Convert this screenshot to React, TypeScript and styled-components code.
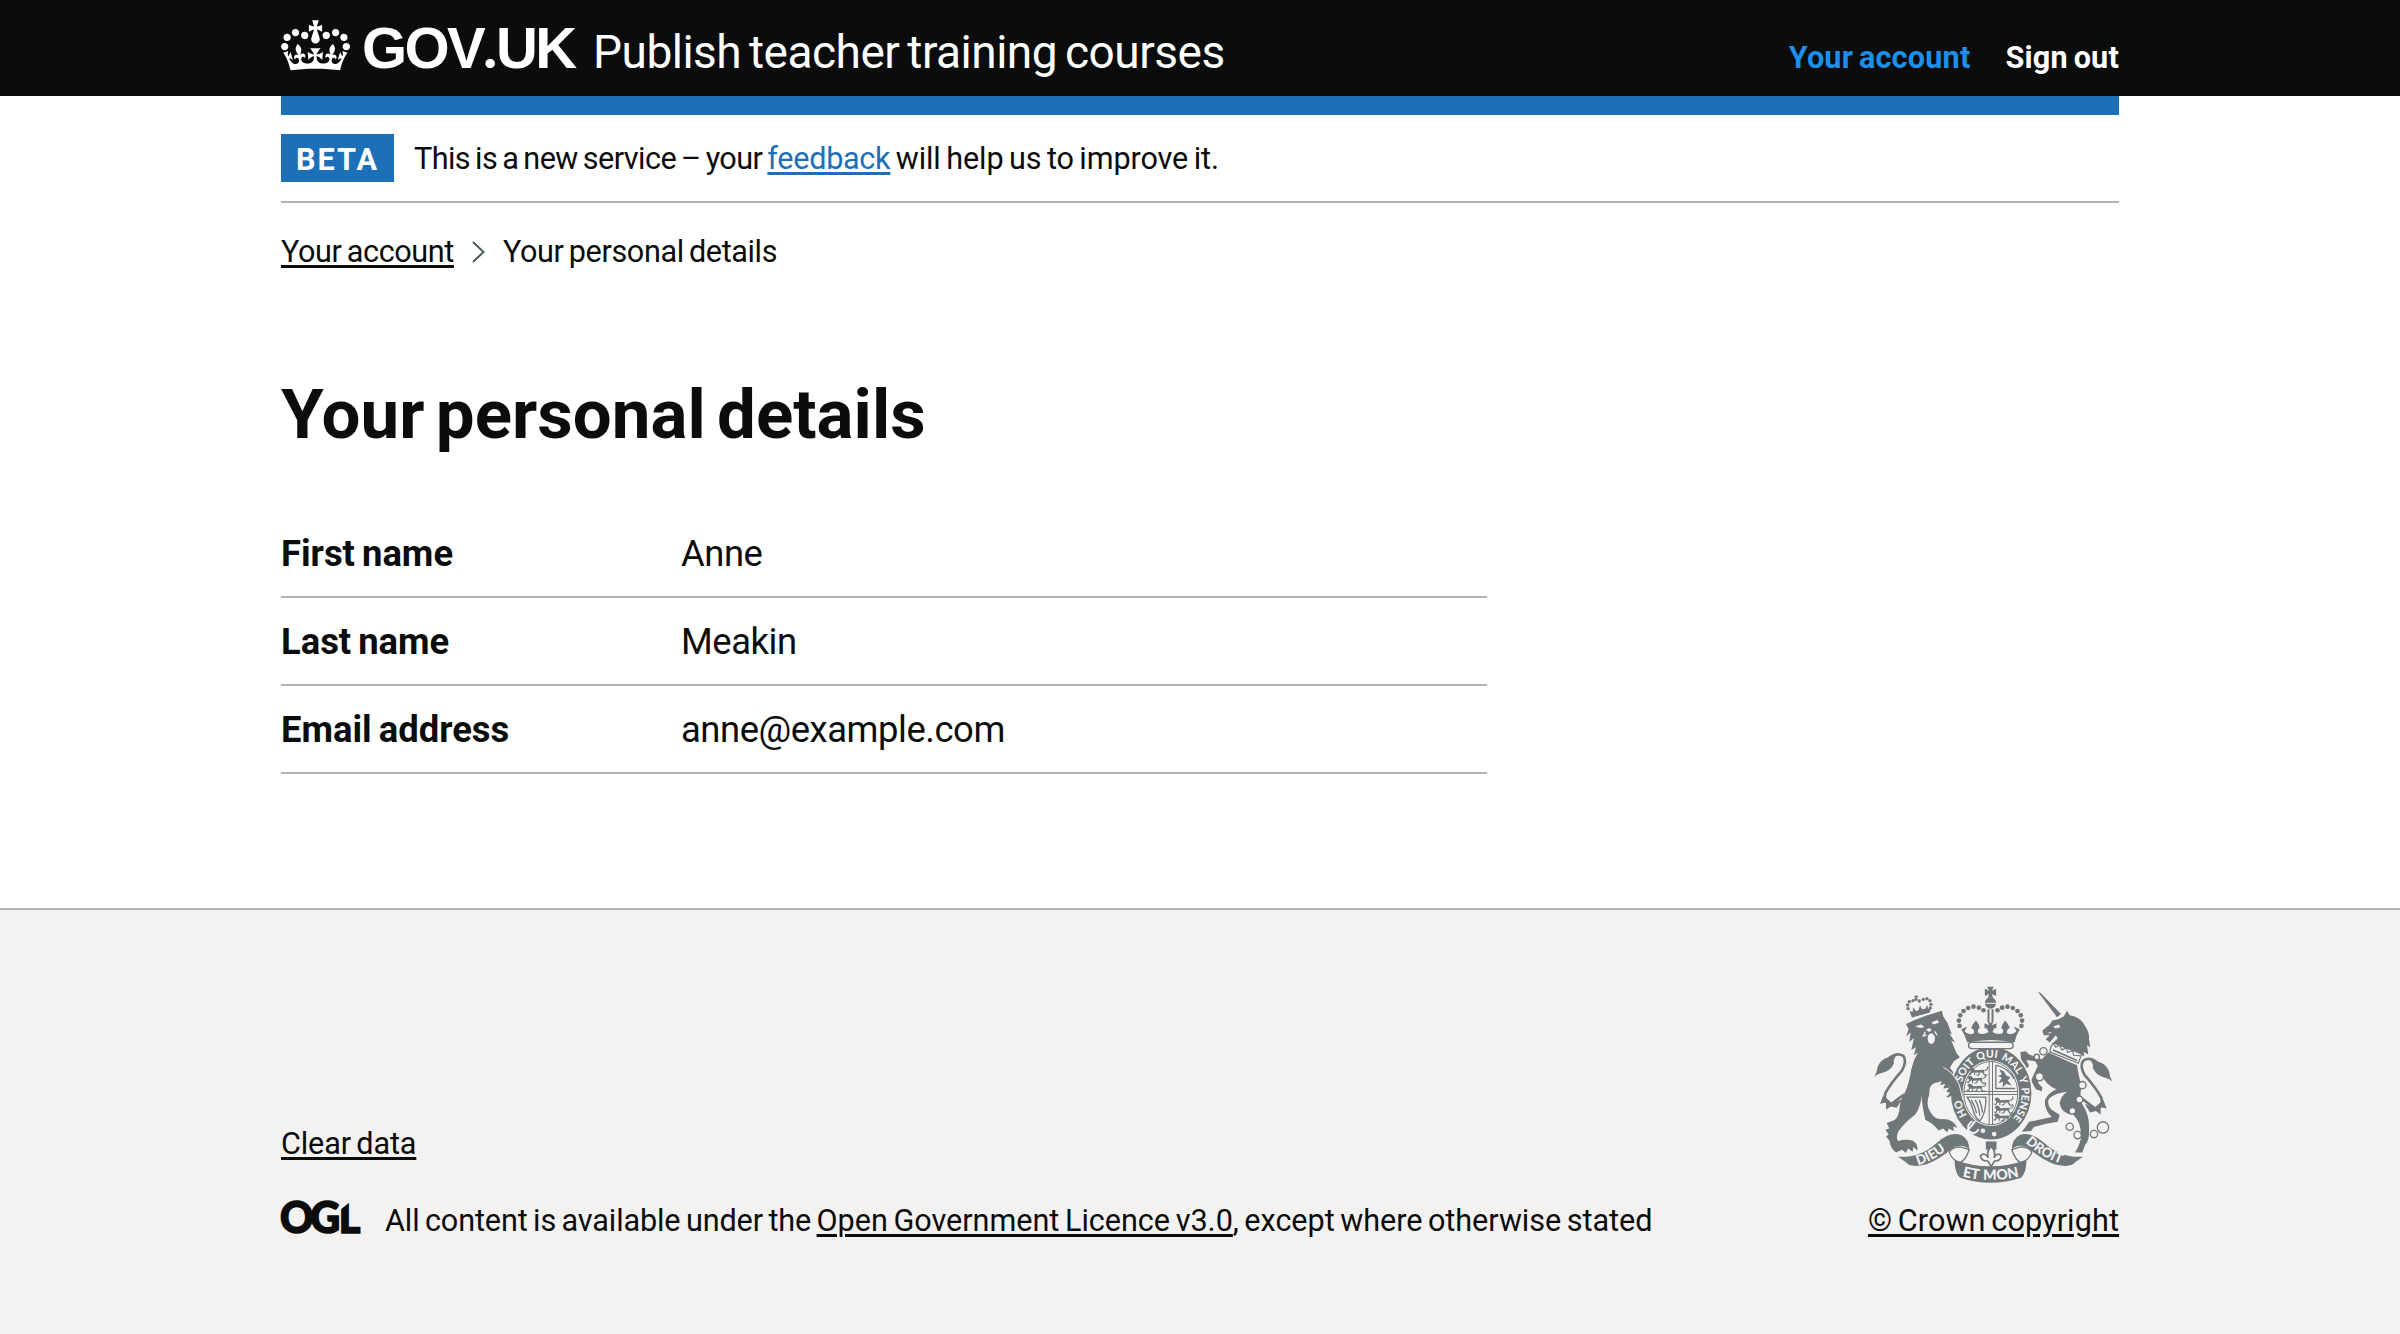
import React from 'react';
import styled, { createGlobalStyle } from 'styled-components';

const ink = '#0b0c0c';
const blue = '#1d70b8';
const rule = '#b1b4b6';
const canvas = '#f3f2f1';
const crest = '#6f777b';

const GlobalStyle = createGlobalStyle`
  body {
    margin: 0;
    background: ${canvas};
    color: ${ink};
    font-family: Roboto, "Liberation Sans", Arial, sans-serif;
    font-size: 30.6px;
    -webkit-font-smoothing: antialiased;
  }
`;

const Page = styled.div`
  display: flex;
  flex-direction: column;
  min-height: 1334px;
  background: #fff;
`;

const Container = styled.div`
  width: 1838px;
  margin: 0 auto;
`;

const Header = styled.header`
  background: ${ink};
  color: #fff;
`;

const HeaderBar = styled(Container)`
  display: flex;
  align-items: baseline;
  height: 96px;
`;

const Crown = styled.svg`
  align-self: flex-start;
  width: 69px;
  height: 51px;
  margin-top: 20px;
  fill: currentColor;
`;

const Wordmark = styled.span`
  margin-left: 12px;
  width: 231px;
  font: 700 58px/95px "Liberation Sans", Arial, sans-serif;
  letter-spacing: -2.6px;
  white-space: nowrap;
`;

const Dot = styled.span`
  font-family: Lato, sans-serif;
  font-weight: 900;
  line-height: 0;
  letter-spacing: -1px;
`;

const ServiceName = styled.span`
  font-size: 46px;
  line-height: 54px;
  letter-spacing: -0.5px;
  word-spacing: -3px;
  white-space: nowrap;
`;

const Nav = styled.nav`
  display: flex;
  gap: 35px;
  margin-left: auto;
`;

const NavLink = styled.a<{ $current?: boolean }>`
  color: ${p => (p.$current ? '#1d8feb' : '#fff')};
  font-weight: 700;
  letter-spacing: 0.2px;
  word-spacing: -2px;
  white-space: nowrap;
`;

const Accent = styled.div`
  height: 19px;
  background: ${blue};
`;

const PhaseBanner = styled.div`
  display: flex;
  align-items: center;
  gap: 20px;
  padding: 19px 0;
  border-bottom: 2px solid ${rule};
`;

const Tag = styled.strong`
  box-sizing: border-box;
  height: 48px;
  width: 113px;
  padding: 2px 0 0 15px;
  line-height: 47px;
  letter-spacing: 2px;
  color: #fff;
  background: ${blue};
`;

const Text = styled.span<{ $ls?: number }>`
  letter-spacing: ${p => p.$ls ?? -0.38}px;
  word-spacing: -2px;
  line-height: 38px;
  white-space: nowrap;
`;

const PhaseText = styled(Text)`
  padding-top: 2px;
`;

const Spaced = styled.span<{ $ls: number }>`
  letter-spacing: ${p => p.$ls}px;
`;

const Link = styled.a<{ $colour?: string; $ls?: number }>`
  color: ${p => p.$colour ?? ink};
  letter-spacing: ${p => (p.$ls === undefined ? 'inherit' : `${p.$ls}px`)};
  text-decoration: underline;
  text-decoration-thickness: 2.6px;
  text-underline-offset: 3px;
`;

const Breadcrumbs = styled.nav`
  display: flex;
  align-items: center;
  padding-top: 30px;
`;

const Chevron = styled.svg`
  width: 13px;
  height: 24px;
  margin: 0 18px 0 18px;
  fill: none;
  stroke: #505a5f;
  stroke-width: 2;
`;

const Title = styled.h1`
  margin: 107px 0 58px;
  font-size: 69px;
  line-height: 74px;
  letter-spacing: 0.05px;
  word-spacing: -6px;
`;

const SummaryList = styled.dl`
  width: 1206px;
  margin: 0;
`;

const SummaryRow = styled.div`
  display: grid;
  grid-template-columns: 400px 1fr;
  height: 86px;
  border-bottom: 2px solid ${rule};
  font-size: 36.4px;
  line-height: 87px;
`;

const Key = styled.dt`
  font-weight: 700;
  word-spacing: -2px;
`;

const Value = styled.dd`
  margin: 0;
  letter-spacing: -0.44px;
`;

const Footer = styled.footer`
  flex: 1;
  margin-top: 134px;
  padding-top: 76px;
  border-top: 2px solid ${rule};
  background: ${canvas};
`;

const FooterRow = styled(Container)`
  display: flex;
  justify-content: space-between;
  align-items: flex-end;
`;

const FooterMeta = styled.div`
  display: flex;
  flex-direction: column;
  gap: 39px;
`;

const Licence = styled.div`
  display: flex;
  align-items: center;
`;

const OglLogo = styled.svg`
  width: 80px;
  height: 38px;
  margin-right: 24px;
  overflow: visible;
  font-family: Lato, sans-serif;
  font-weight: 900;
  font-size: 43px;
  letter-spacing: -3.4px;
  fill: ${ink};
  stroke: ${ink};
  stroke-width: 1.6;
`;

const Copyright = styled.div`
  display: flex;
  flex-direction: column;
  align-items: center;
  gap: 19px;
`;

const ArmsSvg = styled.svg`
  width: 239px;
  height: 197px;
  fill: ${crest};
  overflow: visible;
`;

const Lettering = styled.text<{ $size: number }>`
  font-family: Lato, sans-serif;
  font-weight: 900;
  font-size: ${p => p.$size}px;
  word-spacing: 4px;
  fill: ${canvas};
`;

const details = [
  ['First name', 'Anne'],
  ['Last name', 'Meakin'],
  ['Email address', 'anne@example.com'],
];

const archBeads = [
  [299, 150], [297, 134], [301, 118], [311, 105], [325, 96], [341, 92], [357, 95], [371, 103],
];

const lionCrownBeads = [
  [144, 98], [143, 87], [148, 77], [159, 74], [168, 70], [178, 75], [190, 70], [201, 68], [210, 74], [213, 85], [211, 96],
];

const chainRings = [
  [551, 226, 11], [531, 243, 8], [539, 303, 12], [668, 328, 11], [659, 371, 10],
  [638, 405, 10], [630, 453, 11], [654, 478, 11], [703, 475, 11], [730, 455, 17],
];

const Tail = () => (
  <g>
    <path d="M42 304 Q52 290 52 276 Q62 242 108 241 Q98 254 102 262 Q92 284 70 290 Q52 293 42 304Z" />
    <path d="M88 246 Q112 228 130 240 Q142 256 126 284 Q92 322 76 352 Q70 378 90 388 L132 356" fill="none" stroke={crest} strokeWidth="8" />
    <path d="M70 358 L60 384 L78 380 L78 402 L92 392 L110 396 L126 370 L96 382Z" />
  </g>
);

const Passant = ({ x, y }: { x: number; y: number }) => (
  <g transform={`translate(${x} ${y})`}>
    <path d="M8 8 L4 16 L-1 15 M16 9 L16 18 M32 9 L28 17 L22 18 M40 9 L46 18 L54 18 M46 4 Q60 0 54 -8" fill="none" stroke={crest} strokeWidth="3.5" />
    <path d="M0 0 Q6 -8 14 -2 L18 3 L44 2 L46 10 L8 11Z" />
  </g>
);

const Arms = () => (
  <ArmsSvg viewBox="42 30 718 592" aria-hidden="true">
    {/* lion supporter */}
    <Tail />
    {lionCrownBeads.map(([x, y], i) => <circle key={i} cx={x} cy={y} r="5" />)}
    <path d="M163 62 H175 M169 58 V72" stroke={crest} strokeWidth="4" />
    <path d="M148 104 L158 108 L160 94 L168 106 L176 102 L180 88 L186 100 L196 98 L202 86 L204 98 L212 96 L210 110 L156 125Z" />
    <path d="M138 144 L164 132 L202 118 L246 104 L250 122 L262 140 L276 176 L268 172 L286 200 L274 194 L290 232 L300 244 L282 256 L270 276 L284 294 L300 330 L305 370 L296 374 L290 366 L282 376 L276 364 L258 364 L272 352 L260 348 L268 336 L250 338 L256 324 L240 328 L246 316 L222 322 Q206 330 208 356 Q196 388 212 410 Q224 432 250 430 Q280 430 292 456 L280 452 L282 466 L266 458 L262 470 L250 458 L236 464 Q216 440 196 432 Q188 400 184 360 Q184 390 166 416 Q134 440 116 466 Q106 484 114 496 Q136 490 158 494 Q176 506 172 524 L160 514 L158 528 L144 518 L138 532 L126 522 L108 530 Q92 520 88 494 L78 482 L86 476 L76 462 L88 458 L80 442 L96 436 Q112 434 118 404 Q118 374 136 348 Q148 320 154 280 Q160 252 174 230 L162 238 L168 214 L154 222 L162 186 L148 198 L152 170 L138 182 L146 160Z" />
    <path d="M166 150 L184 146 L194 154 L178 156Z M214 140 L232 132 L238 140 L222 146Z M198 162 L208 156 L216 162 L208 168Z" fill={canvas} />
    <ellipse cx="214" cy="188" rx="11" ry="16" fill={canvas} />
    <path d="M196 168 L190 180 L200 178 M224 166 L232 178" fill="none" stroke={canvas} strokeWidth="4" />

    {/* unicorn supporter */}
    <g transform="matrix(-1 0 0 1 801 14)"><Tail /></g>
    <path d="M535 48 L542 50 L604 114 L592 124Z" />
    <path d="M612 122 L622 104 L630 118 Q664 124 676 150 Q690 170 688 190 L692 214 L682 208 L686 236 L672 228 L674 242 L656 232 L578 202 L594 188 L588 178 L570 200 L558 190 L570 178 L552 178 L548 164 L570 146 L578 134 L596 130Z" />
    <path d="M580 152 L598 146 L602 154 L588 158Z M560 172 L574 168 L574 172Z" fill={canvas} />
    <path d="M574 212 L580 202 L588 214 L600 208 L606 222 L620 216 L624 230 L638 224 L642 238 L664 240 L656 262 L570 228Z" fill={canvas} stroke={crest} strokeWidth="3.5" />
    <path d="M580 222 L652 254" fill="none" stroke={crest} strokeWidth="5" />
    <path d="M566 230 L652 268 Q656 300 666 332 Q656 370 674 396 Q690 424 688 462 Q690 492 676 508 L668 530 L646 530 L656 512 L664 488 Q666 440 640 416 Q604 414 600 382 Q604 360 622 348 Q586 352 568 368 Q560 384 574 400 L600 418 L594 438 Q560 442 522 454 L514 466 L486 468 L498 452 L508 438 L576 424 Q552 400 556 372 Q566 350 590 340 Q556 328 546 296 L534 320 L548 336 L546 346 L528 340 L514 314 L534 270 L526 256 L500 252 L508 270 L500 280 L484 254 L482 228 L498 226 L508 236 L546 250Z" />
    {chainRings.map(([cx, cy, r], i) => (
      <circle key={i} cx={cx} cy={cy} r={r} fill={canvas} stroke={crest} strokeWidth="4" />
    ))}

    {/* garter and shield */}
    <ellipse cx="394" cy="352" rx="126" ry="144" fill={canvas} />
    <ellipse cx="394" cy="352" rx="121" ry="139" />
    <ellipse cx="393" cy="352" rx="85" ry="99" fill={canvas} />
    <ellipse cx="393" cy="352" rx="81" ry="95" fill="none" stroke={crest} strokeWidth="3" />
    <path id="garterPath" d="M323 420 A91 107 0 0 1 394 245 A91 107 0 0 1 454 433" fill="none" />
    <Lettering $size={32}><textPath href="#garterPath" startOffset="2">HO</textPath></Lettering>
    <Lettering $size={32}>
      <textPath href="#garterPath" startOffset="104">SOIT QUI MAL Y PENSE</textPath>
    </Lettering>
    <path d="M318 470 Q344 440 346 436 M338 436 Q318 446 328 468 Q348 478 356 460" fill="none" stroke={canvas} strokeWidth="6" />
    <circle cx="369" cy="465" r="7" fill={canvas} />
    <circle cx="403" cy="475" r="7" fill={canvas} />
    <path d="M388 256 V448 M398 256 V448 M312 347 H474 M312 356 H474" stroke={crest} strokeWidth="3" />
    <Passant x={328} y={280} /><Passant x={322} y={304} /><Passant x={322} y={328} />
    <Passant x={404} y={370} /><Passant x={404} y={394} /><Passant x={402} y={417} />
    <path d="M408 268 V338 H466 M408 268 Q446 276 464 310" fill="none" stroke={crest} strokeWidth="4" />
    <path d="M418 280 L432 286 L440 300 L452 304 L444 314 L456 330 L440 324 L428 334 L430 318 L416 322 L426 306 L414 300 L426 296Z" />
    <path d="M322 364 H378 Q380 410 360 436 Q344 424 340 404 Q334 380 322 364Z M334 372 Q346 392 350 412 M346 372 Q356 388 360 420 M358 372 Q366 390 368 410" fill="none" stroke={crest} strokeWidth="4" />

    {/* paw laid over the garter */}
    <path d="M252 274 Q284 296 300 330 L306 370 L292 362 L286 374 L276 360 L262 364 L270 350 L262 342 L270 334Z" />
    <path d="M250 274 Q280 290 298 326 L309 372" fill="none" stroke={canvas} strokeWidth="3" />

    {/* crown */}
    <path d="M382 32 H402 L396 44 L409 38 V60 L396 54 L400 65 H384 L388 54 L375 60 V38 L388 44Z" />
    <circle cx="392" cy="81" r="17" />
    <path d="M374 82 H410" stroke={canvas} strokeWidth="3" />
    <path d="M386 100 V140 M398 100 V140" stroke={crest} strokeWidth="6" />
    {archBeads.map(([x, y], i) => (
      <g key={i}>
        <circle cx={x} cy={y} r="7" />
        <circle cx={784 - x} cy={y} r="7" />
      </g>
    ))}
    <path d="M304 160 L322 152 L314 166 Q326 180 342 172 Q346 162 334 156 Q340 142 348 134 Q358 144 360 156 Q350 162 356 172 Q372 178 386 168 L380 156 L374 158 V142 L388 148 L384 140 H400 L396 148 L410 142 V158 L404 156 L398 168 Q412 178 428 172 Q434 162 424 156 Q428 144 436 134 Q444 142 450 156 Q438 162 442 172 Q458 180 470 166 L462 152 L480 160 Q468 180 464 200 Q392 184 322 200 Q316 178 304 160Z" />
    <rect x="326" y="199" width="134" height="19" rx="9.5" fill={canvas} stroke={crest} strokeWidth="4" />

    {/* motto scroll */}
    <path d="M378 497 H410 V522 H378Z" />
    <path d="M394 512 Q410 528 402 546 Q414 528 424 540 Q424 556 404 556 L394 572 L384 556 Q362 556 362 540 Q374 528 386 546 Q378 528 394 512Z" fill={canvas} stroke={crest} strokeWidth="5" />
    <path d="M268 530 Q276 512 304 514 L328 522 Q318 552 300 562 Q276 552 268 530Z M516 530 Q508 512 480 514 L456 522 Q466 552 484 562 Q508 552 516 530Z" fill={canvas} stroke={crest} strokeWidth="4" />
    <path d="M114 543 Q180 548 232 500 Q272 466 304 478 Q328 490 328 522 Q312 504 282 514 Q238 552 200 566 Q150 578 138 560Z" />
    <path d="M670 543 Q604 548 552 500 Q512 466 480 478 Q456 490 456 522 Q472 504 502 514 Q546 552 584 566 Q634 578 646 560Z" />
    <path d="M284 552 Q392 592 500 552 Q500 590 484 606 Q392 636 300 606 Q284 590 284 552Z" />
    <path id="mottoLeft" d="M174 568 Q232 552 290 496" fill="none" />
    <path id="mottoRight" d="M497 500 Q552 552 630 572" fill="none" />
    <path id="mottoMid" d="M307 602 Q392 624 486 601" fill="none" />
    <Lettering $size={40}><textPath href="#mottoLeft">DIEU</textPath></Lettering>
    <Lettering $size={40}><textPath href="#mottoRight">DROIT</textPath></Lettering>
    <Lettering $size={43}><textPath href="#mottoMid">ET MON</textPath></Lettering>
  </ArmsSvg>
);

const crownPath =
  'M25 30.2c3.5 1.5 7.7-.2 9.1-3.7 1.5-3.6-.2-7.8-3.9-9.2-3.6-1.4-7.6.3-9.1 3.9-1.4 3.5.3 7.5 3.9 9zM9 39.5c3.6 1.5 7.8-.2 9.2-3.7 1.5-3.6-.2-7.8-3.9-9.1-3.6-1.5-7.6.2-9.1 3.8-1.4 3.5.3 7.5 3.8 9zM4.4 57.2c3.5 1.5 7.7-.2 9.1-3.8 1.5-3.6-.2-7.7-3.9-9.1-3.5-1.5-7.6.3-9.1 3.8-1.4 3.5.3 7.6 3.9 9.1zm38.3-21.4c3.5 1.5 7.7-.2 9.1-3.8 1.5-3.6-.2-7.7-3.9-9.1-3.6-1.5-7.6.3-9.1 3.8-1.3 3.6.4 7.7 3.9 9.1zm64.4-5.6c-3.6 1.5-7.8-.2-9.1-3.7-1.5-3.6.2-7.8 3.8-9.2 3.6-1.4 7.7.3 9.2 3.9 1.3 3.5-.4 7.5-3.9 9zm15.9 9.3c-3.6 1.5-7.7-.2-9.1-3.7-1.5-3.6.2-7.8 3.7-9.1 3.6-1.5 7.7.2 9.2 3.8 1.5 3.5-.3 7.5-3.8 9zm4.7 17.7c-3.6 1.5-7.8-.2-9.2-3.8-1.5-3.6.2-7.7 3.9-9.1 3.6-1.5 7.7.3 9.2 3.8 1.3 3.5-.4 7.6-3.9 9.1zM89.3 35.8c-3.6 1.5-7.8-.2-9.2-3.8-1.4-3.6.2-7.7 3.9-9.1 3.6-1.5 7.7.3 9.2 3.8 1.4 3.6-.3 7.7-3.9 9.1zM69.7 17.7l8.9 4.7V9.3l-8.9 2.8c-.2-.3-.5-.6-.9-.9L72.4 0H59.6l3.5 11.2c-.3.3-.6.5-.9.9l-8.8-2.8v13.1l8.8-4.7c.3.3.6.7.9.9l-5 15.4v.1c-.2.8-.4 1.6-.4 2.4 0 4.1 3.1 7.5 7 8.1h.2c.3 0 .7.1 1 .1.4 0 .7 0 1-.1h.2c4-.6 7.1-4.1 7.1-8.1 0-.8-.1-1.7-.4-2.4V34l-5.1-15.4c.4-.2.7-.6 1-.9zM66 92.8c16.9 0 32.8 1.1 47.1 3.2 4-16.9 8.9-26.7 14-33.5l-9.6-3.4c1 4.9 1.1 7.2 0 10.2-1.5-1.4-3-4.3-4.2-8.7L108.6 76c2.8-2 5-3.2 7.5-3.3-4.4 9.4-10 11.9-13.6 11.2-4.3-.8-6.3-4.6-5.6-7.9 1-4.7 5.7-5.9 8-.5 4.3-8.7-3-11.4-7.6-8.8 7.1-7.2 7.9-13.5 2.1-21.1-8 6.1-8.1 12.3-4.5 20.8-4.7-5.4-12.1-2.5-9.5 6.2 3.4-5.2 7.9-2 7.2 3.1-.6 4.3-6.4 7.8-13.5 7.2-10.3-.9-10.9-8-11.2-13.8 2.5-.5 7.1 1.8 11 7.3L80.2 60c-4.1 4.4-8 5.3-12.3 5.4 1.4-4.4 8-11.6 8-11.6H55.5s6.4 7.2 7.9 11.6c-4.2-.1-8-1-12.3-5.4l1.4 16.4c3.9-5.5 8.5-7.7 10.9-7.3-.3 5.8-.9 12.8-11.1 13.8-7.2.6-12.9-2.9-13.5-7.2-.7-5 3.8-8.3 7.1-3.1 2.7-8.7-4.6-11.6-9.4-6.2 3.7-8.5 3.6-14.7-4.6-20.8-5.8 7.6-5 13.9 2.2 21.1-4.7-2.6-11.9.1-7.7 8.8 2.3-5.5 7.1-4.2 8.1.5.7 3.3-1.3 7.1-5.7 7.9-3.5.7-9-1.8-13.5-11.2 2.5.1 4.7 1.3 7.5 3.3l-4.7-15.4c-1.2 4.4-2.7 7.2-4.3 8.7-1.1-3-.9-5.3 0-10.2l-9.5 3.4c5 6.9 9.9 16.7 14 33.5 14.8-2.1 30.8-3.2 47.7-3.2z';

export default function App() {
  return (
    <Page>
      <GlobalStyle />
      <Header>
        <HeaderBar>
          <Crown viewBox="0 0 132 97" aria-hidden="true"><path fillRule="evenodd" d={crownPath} /></Crown>
          <Wordmark>GOV<Dot>.</Dot>UK</Wordmark>
          <ServiceName>Publish teacher training courses</ServiceName>
          <Nav>
            <NavLink $current>Your account</NavLink>
            <NavLink>Sign out</NavLink>
          </Nav>
        </HeaderBar>
      </Header>
      <Container>
        <Accent />
        <PhaseBanner>
          <Tag>BETA</Tag>
          <PhaseText>
            <Spaced $ls={-0.56}>This is a new service – your </Spaced>
            <Link $colour={blue} $ls={-0.3}>feedback</Link>
            <Spaced $ls={-0.1}> will help us to improve it.</Spaced>
          </PhaseText>
        </PhaseBanner>
        <Breadcrumbs>
          <Text><Link>Your account</Link></Text>
          <Chevron viewBox="0 0 13 24"><path d="M1 2 L11.5 12 L1 22" /></Chevron>
          <Text>Your personal details</Text>
        </Breadcrumbs>
        <main>
          <Title>Your personal details</Title>
          <SummaryList>
            {details.map(([k, v]) => (
              <SummaryRow key={k}><Key>{k}</Key><Value>{v}</Value></SummaryRow>
            ))}
          </SummaryList>
        </main>
      </Container>
      <Footer>
        <FooterRow>
          <FooterMeta>
            <Text $ls={-0.14}><Link>Clear data</Link></Text>
            <Licence>
              <OglLogo viewBox="0 0 80 38" aria-hidden="true">
                <clipPath id="ellTop"><path d="M-2 -4 H59 V8 L69 0 V20 H82 V38 H-2Z" /></clipPath>
                <g clipPath="url(#ellTop)">
                  <text x="-1" y="31.4" transform="scale(0.96 1)">OG<tspan dx="2">L</tspan></text>
                </g>
              </OglLogo>
              <Text $ls={-0.12}>
                All content is available under the <Link $ls={-0.02}>Open Government Licence v3.0</Link>
                <Spaced $ls={-0.04}>, except where otherwise stated</Spaced>
              </Text>
            </Licence>
          </FooterMeta>
          <Copyright>
            <Arms />
            <Text $ls={0.1}><Link>© Crown copyright</Link></Text>
          </Copyright>
        </FooterRow>
      </Footer>
    </Page>
  );
}
